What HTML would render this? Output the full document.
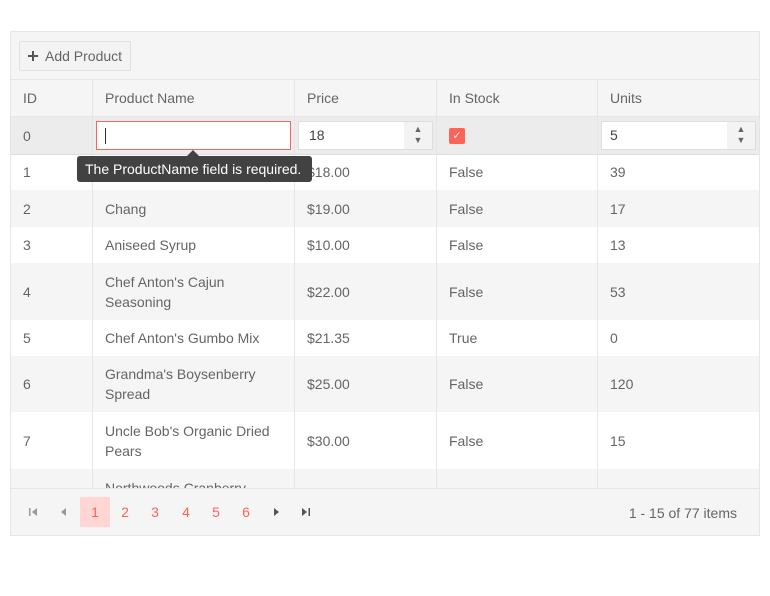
<!DOCTYPE html>
<html><head><style>
body{margin:0;background:#fff;font-family:"Liberation Sans",sans-serif;font-size:14px;color:#656565}
.g{position:absolute;left:10px;top:31px;width:748px;height:503px;border:1px solid #e6e6e6;background:#fff;overflow:hidden}
.tb{position:absolute;left:0;top:0;width:748px;height:47px;background:#f5f5f5;border-bottom:1px solid #e6e6e6}
.btn{position:absolute;left:8px;top:9px;width:112px;height:30px;border:1px solid #e0e0e0;background:#f3f3f3;border-radius:2px;box-sizing:border-box;line-height:28px;padding-left:7px;color:#656565;font-size:14px}
.row{position:absolute;left:0;width:748px}
.c{position:absolute;top:0;height:100%;box-sizing:border-box;border-left:1px solid #e6e6e6;padding:0 12px;display:flex;align-items:center;line-height:20px}
.c:first-child{border-left:none}
.pg{position:absolute;left:0;top:456px;width:748px;height:47px;background:#f5f5f5;border-top:1px solid #e6e6e6}
.pn{position:absolute;top:8px;width:30px;height:30px;line-height:30px;text-align:center;color:#ff6358}
.pn svg{margin-top:10px}
</style></head><body>
<div class="g">
<div class="tb"><div class="btn"><svg width="12" height="12" style="vertical-align:-1px;margin-right:6px"><path d="M6 1v10M1 6h10" stroke="#555" stroke-width="2"/></svg>Add Product</div></div>

<div class="row" style="top:48px;height:36px;background:#f5f5f5;border-bottom:1px solid #e6e6e6">
<div class="c" style="left:0;width:81px">ID</div><div class="c" style="left:81px;width:202px">Product Name</div><div class="c" style="left:283px;width:142px">Price</div><div class="c" style="left:425px;width:161px">In Stock</div><div class="c" style="left:586px;width:162px">Units</div></div>

<div class="row" style="top:85px;height:37px;background:#ececec;border-bottom:1px solid #ddd">
<div class="c" style="left:0;width:81px">0</div>
<div class="c" style="left:81px;width:202px;padding:0 3px"><div style="width:195px;height:29px;border:1px solid #ff6358;background:#fff;box-sizing:border-box;"><div style="width:1px;height:16px;background:#333;margin:6px 0 0 8px"></div></div></div>
<div class="c" style="left:283px;width:142px;padding:0 3px"><div style="width:135px;height:29px;border:1px solid #ddd;background:#fff;box-sizing:border-box;position:relative;line-height:27px;padding-left:10px;color:#444">18<div style="position:absolute;right:0;top:0;width:28px;height:27px;background:#f3f3f3;font-size:9px;line-height:11px;text-align:center;color:#666;padding-top:2px;box-sizing:border-box">▲<br>▼</div></div></div>
<div class="c" style="left:425px;width:161px"><div style="width:16px;height:16px;background:#ff6358;border-radius:2px;color:#fff;font-size:11px;text-align:center;line-height:16px">✓</div></div>
<div class="c" style="left:586px;width:162px;padding:0 3px"><div style="width:156px;height:29px;border:1px solid #ddd;background:#fff;box-sizing:border-box;position:relative;line-height:27px;padding-left:8px;color:#444">5<div style="position:absolute;right:0;top:0;width:28px;height:27px;background:#f3f3f3;font-size:9px;line-height:11px;text-align:center;color:#666;padding-top:2px;box-sizing:border-box">▲<br>▼</div></div></div>
</div>

<div class="row" style="top:122px;height:36px"><div class="c" style="left:0;width:81px">1</div><div class="c" style="left:81px;width:202px">Chai</div><div class="c" style="left:283px;width:142px">$18.00</div><div class="c" style="left:425px;width:161px">False</div><div class="c" style="left:586px;width:162px">39</div></div>
<div class="row" style="top:158px;height:37px;background:#f5f5f5"><div class="c" style="left:0;width:81px">2</div><div class="c" style="left:81px;width:202px">Chang</div><div class="c" style="left:283px;width:142px">$19.00</div><div class="c" style="left:425px;width:161px">False</div><div class="c" style="left:586px;width:162px">17</div></div>
<div class="row" style="top:195px;height:36px"><div class="c" style="left:0;width:81px">3</div><div class="c" style="left:81px;width:202px">Aniseed Syrup</div><div class="c" style="left:283px;width:142px">$10.00</div><div class="c" style="left:425px;width:161px">False</div><div class="c" style="left:586px;width:162px">13</div></div>
<div class="row" style="top:231px;height:57px;background:#f5f5f5"><div class="c" style="left:0;width:81px">4</div><div class="c" style="left:81px;width:202px">Chef Anton's Cajun Seasoning</div><div class="c" style="left:283px;width:142px">$22.00</div><div class="c" style="left:425px;width:161px">False</div><div class="c" style="left:586px;width:162px">53</div></div>
<div class="row" style="top:288px;height:36px"><div class="c" style="left:0;width:81px">5</div><div class="c" style="left:81px;width:202px">Chef Anton's Gumbo Mix</div><div class="c" style="left:283px;width:142px">$21.35</div><div class="c" style="left:425px;width:161px">True</div><div class="c" style="left:586px;width:162px">0</div></div>
<div class="row" style="top:324px;height:56px;background:#f5f5f5"><div class="c" style="left:0;width:81px">6</div><div class="c" style="left:81px;width:202px">Grandma's Boysenberry Spread</div><div class="c" style="left:283px;width:142px">$25.00</div><div class="c" style="left:425px;width:161px">False</div><div class="c" style="left:586px;width:162px">120</div></div>
<div class="row" style="top:380px;height:57px"><div class="c" style="left:0;width:81px">7</div><div class="c" style="left:81px;width:202px">Uncle Bob's Organic Dried Pears</div><div class="c" style="left:283px;width:142px">$30.00</div><div class="c" style="left:425px;width:161px">False</div><div class="c" style="left:586px;width:162px">15</div></div>
<div class="row" style="top:437px;height:57px;background:#f5f5f5"><div class="c" style="left:0;width:81px">8</div><div class="c" style="left:81px;width:202px">Northwoods Cranberry Sauce</div><div class="c" style="left:283px;width:142px"></div><div class="c" style="left:425px;width:161px"></div><div class="c" style="left:586px;width:162px"></div></div>

<div class="pg">
<div class="pn" style="left:7px"><svg width="10" height="10"><path d="M1 1h1.5v8H1zM9 1v8L4 5z" fill="#999"/></svg></div>
<div class="pn" style="left:38px"><svg width="10" height="10"><path d="M7 1v8L2 5z" fill="#999"/></svg></div>
<div class="pn" style="left:69px;background:#ffd6d4">1</div>
<div class="pn" style="left:99px">2</div><div class="pn" style="left:129px">3</div><div class="pn" style="left:160px">4</div><div class="pn" style="left:190px">5</div><div class="pn" style="left:220px">6</div>
<div class="pn" style="left:250px"><svg width="10" height="10"><path d="M3 1v8L8 5z" fill="#555"/></svg></div>
<div class="pn" style="left:280px"><svg width="10" height="10"><path d="M1 1v8L6 5zM7.5 1H9v8H7.5z" fill="#555"/></svg></div>
<div style="position:absolute;right:22px;top:16px;color:#656565">1 - 15 of 77 items</div>
</div>
</div>

<div style="position:absolute;left:77px;top:156px;width:235px;height:26px;background:#424242;border-radius:3px;color:#fff;line-height:26px;padding-left:8px;box-sizing:border-box;font-size:14px">The ProductName field is required.</div>
<div style="position:absolute;left:187px;top:150px;width:0;height:0;border-left:6px solid transparent;border-right:6px solid transparent;border-bottom:6px solid #424242"></div>
</body></html>
